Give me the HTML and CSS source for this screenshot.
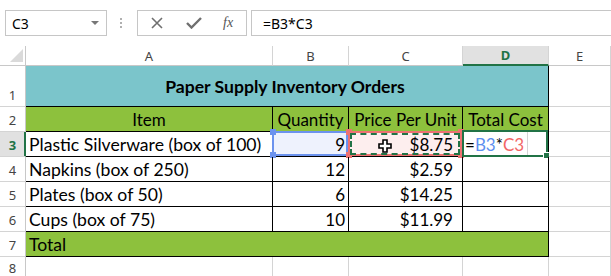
FILE: index.html
```html
<!DOCTYPE html>
<html lang="en">

<head>
    <meta charset="UTF-8">
    <title>Paper Supply Inventory Orders</title>
    <link rel="stylesheet" href="styles.css">
</head>

<body>

    <div class="formula-bar">
        <div class="name-box">
            <span>C3</span>
            <span class="caret"></span>
        </div>
        <div class="grip"><i></i><i></i><i></i></div>
        <div class="fx-buttons">
            <svg width="12" height="12" viewBox="0 0 12 12">
                <path d="M1 1L11 11M11 1L1 11" stroke="#6f6f6f" stroke-width="1.6" fill="none" />
            </svg>
            <svg width="16" height="12" viewBox="0 0 16 12">
                <path d="M1 6L5.5 10.5L15 1" stroke="#6f6f6f" stroke-width="2.4" fill="none" />
            </svg>
            <span class="fx">fx</span>
        </div>
        <div class="formula-input">=B3*C3</div>
    </div>

    <div class="sheet">
        <!-- column headers -->
        <div class="corner"><span class="tri"></span></div>
        <div class="col-head">A</div>
        <div class="col-head">B</div>
        <div class="col-head">C</div>
        <div class="col-head active">D</div>
        <div class="col-head">E</div>

        <!-- row 1 -->
        <div class="row-head">1</div>
        <div class="cell t title span4">Paper Supply Inventory Orders</div>
        <div class="cell"></div>

        <!-- row 2 -->
        <div class="row-head">2</div>
        <div class="cell t head">Item</div>
        <div class="cell t head">Quantity</div>
        <div class="cell t head">Price Per Unit</div>
        <div class="cell t head">Total Cost</div>
        <div class="cell"></div>

        <!-- row 3 -->
        <div class="row-head active">3</div>
        <div class="cell t item">Plastic Silverware (box of 100)</div>
        <div class="cell t num ref-b">9
            <div class="range blue">
                <b class="h tl"></b><b class="h bl"></b>
            </div>
        </div>
        <div class="cell t price ref-c">$8.75
            <div class="range red">
                <b class="h tl"></b><b class="h bl"></b><b class="h tr"></b><b class="h br"></b>
            </div>
            <div class="marquee"></div>
            <svg class="pointer" width="14" height="14" viewBox="0 0 14 14">
                <path d="M5 1H9V5H13V9H9V13H5V9H1V5H5Z" fill="#fff" stroke="#000" stroke-width="1.6" />
            </svg>
        </div>
        <div class="cell t editing">
            <span class="edit">=<span class="ref1">B3</span>*<span class="ref2">C3</span></span>
            <div class="selected"><b class="fill"></b></div>
        </div>
        <div class="cell"></div>

        <!-- row 4 -->
        <div class="row-head">4</div>
        <div class="cell t item">Napkins (box of 250)</div>
        <div class="cell t num">12</div>
        <div class="cell t price">$2.59</div>
        <div class="cell t"></div>
        <div class="cell"></div>

        <!-- row 5 -->
        <div class="row-head">5</div>
        <div class="cell t item">Plates (box of 50)</div>
        <div class="cell t num">6</div>
        <div class="cell t price">$14.25</div>
        <div class="cell t"></div>
        <div class="cell"></div>

        <!-- row 6 -->
        <div class="row-head">6</div>
        <div class="cell t item">Cups (box of 75)</div>
        <div class="cell t num">10</div>
        <div class="cell t price">$11.99</div>
        <div class="cell t"></div>
        <div class="cell"></div>

        <!-- row 7 -->
        <div class="row-head">7</div>
        <div class="cell t total span4">Total</div>
        <div class="cell"></div>

        <!-- row 8 -->
        <div class="row-head last">8</div>
        <div class="cell"></div>
        <div class="cell"></div>
        <div class="cell"></div>
        <div class="cell"></div>
        <div class="cell"></div>
    </div>

</body>

</html>
```

FILE: styles.css
```css
body {
    margin: 0;
    background: #fff;
    font-family: "Noto Sans", sans-serif;
    overflow: hidden;
}

/* formula bar */
.formula-bar {
    display: flex;
    align-items: stretch;
    height: 26px;
    padding: 10px 0 10px 5px;
}

.name-box {
    width: 102px;
    box-sizing: border-box;
    border: 1px solid #c6c6c6;
    display: flex;
    align-items: center;
    justify-content: space-between;
    padding: 0 7px 0 6px;
    font-size: 14px;
    color: #000;
}

.caret {
    width: 0;
    height: 0;
    border-left: 4px solid transparent;
    border-right: 4px solid transparent;
    border-top: 4px solid #777;
}

.grip {
    width: 3px;
    margin: 0 14px 0 13px;
    display: flex;
    flex-direction: column;
    justify-content: center;
    gap: 2px;
}

.grip i {
    display: block;
    width: 2px;
    height: 2px;
    background: #b0b0b0;
}

.fx-buttons {
    width: 110px;
    box-sizing: border-box;
    border: 1px solid #c6c6c6;
    display: flex;
    align-items: center;
    padding: 0 0 0 13px;
    gap: 23px;
}

.fx {
    font-family: "Liberation Serif", serif;
    font-style: italic;
    font-size: 14px;
    color: #555;
    margin-left: -2px;
}

.formula-input {
    flex: 1;
    margin-left: 4px;
    border: 1px solid #c6c6c6;
    border-right: none;
    display: flex;
    align-items: center;
    padding-left: 11px;
    font-size: 14px;
    color: #000;
}

/* sheet grid */
.sheet {
    display: grid;
    grid-template-columns: 26px 247px 76px 114px 86px 1fr;
    grid-template-rows: 20px 41px 25px 25px 25px 25px 25px 25px 25px;
}

.sheet > div {
    box-sizing: border-box;
    border-right: 1px solid #d4d4d4;
    border-bottom: 1px solid #d4d4d4;
}

.corner {
    position: relative;
    border-color: #c8c8c8 !important;
}

.tri {
    position: absolute;
    right: 2px;
    bottom: 3px;
    width: 0;
    height: 0;
    border-left: 13px solid transparent;
    border-bottom: 13px solid #dadada;
}

.col-head {
    display: flex;
    align-items: center;
    justify-content: center;
    font-size: 13px;
    color: #444;
    border-bottom-color: #c8c8c8 !important;
}

.col-head.active {
    background: #e1e1e1;
    color: #217346;
    font-weight: bold;
    border-bottom: 2px solid #217346 !important;
}

.row-head {
    display: flex;
    align-items: flex-end;
    justify-content: center;
    padding-bottom: 2px;
    font-size: 13px;
    color: #444;
    border-right-color: #c8c8c8 !important;
}

.row-head.last {
    align-items: flex-start;
    padding: 2px 0 0;
}

.row-head.active {
    background: #e1e1e1;
    color: #217346;
    font-weight: bold;
    border-right-color: #217346 !important;
    box-shadow: inset -1px 0 #217346;
}

.cell {
    display: flex;
    align-items: center;
    padding: 0 4px;
    font-family: Lato, "Liberation Sans", sans-serif;
    font-size: 17px;
    color: #000;
    white-space: nowrap;
    position: relative;
}

.cell.t {
    border-right-color: #000;
    border-bottom-color: #000;
}

.span4 {
    grid-column: span 4;
}

.item {
    font-size: 17.6px;
    padding-left: 3px;
}

.title {
    background: #7bc5cb;
    justify-content: center;
    font-weight: bold;
    font-size: 17.6px;
    padding-left: 0;
}

.head {
    background: #8dc13d;
    justify-content: center;
}

.total {
    background: #8dc13d;
    font-size: 17.6px;
    padding-left: 3px;
}

.num {
    justify-content: flex-end;
    padding-right: 3px;
}

.price {
    justify-content: flex-end;
    padding-right: 9px;
}

/* references in the formula */
.ref-b {
    background: #eef2fd;
}

.ref-c {
    background: #fdeeee;
}

.range {
    position: absolute;
    left: -1px;
    top: -1px;
    right: 0;
    bottom: 0;
    border: 2px solid;
}

.range.blue {
    border-color: #6c93ee;
}

.range.red {
    border-color: #ee7272;
}

.h {
    position: absolute;
    width: 6px;
    height: 6px;
}

.blue .h {
    background: #6c93ee;
}

.red .h {
    background: #ee7272;
}

.h.tl {
    left: -4px;
    top: -4px;
}

.h.bl {
    left: -4px;
    bottom: -4px;
}

.h.tr {
    right: -4px;
    top: -4px;
}

.h.br {
    right: -4px;
    bottom: -4px;
}

.marquee {
    position: absolute;
    left: 1px;
    top: 1px;
    right: 2px;
    bottom: 1px;
    border: 2px dashed #217346;
}

.pointer {
    position: absolute;
    left: 29px;
    top: 7px;
}

/* active cell in edit mode */
.editing {
    padding-left: 2px;
}

.edit {
    display: flex;
    align-items: center;
    height: 100%;
    padding-right: 3px;
    width: 59px;
    border-right: 1px solid #d4d4d4;
}

.ref1 {
    color: #5d8ff0;
}

.ref2 {
    color: #f26666;
}

.selected {
    position: absolute;
    left: -1px;
    top: -2px;
    right: 0;
    bottom: -1px;
    border: 2px solid #217346;
}

.fill {
    position: absolute;
    right: -4px;
    bottom: -4px;
    width: 5px;
    height: 5px;
    background: #217346;
    border: 1px solid #fff;
}
```
